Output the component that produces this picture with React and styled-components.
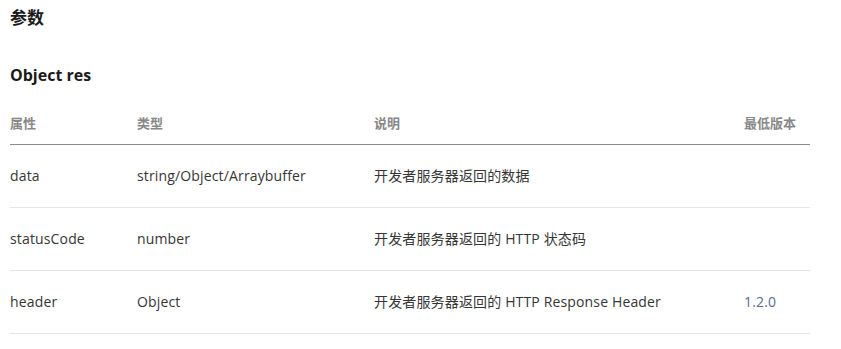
import styled, { createGlobalStyle } from "styled-components";

const GlobalStyle = createGlobalStyle`
  body {
    margin: 0;
    background: #fff;
    font-family: "Open Sans", "Noto Sans CJK SC", sans-serif;
    color: #353535;
  }
`;

const Page = styled.div`
  padding: 6px 10px 0;
`;

const Title = styled.h3`
  margin: 0;
  font-size: 17px;
  line-height: 24px;
  font-weight: 700;
  color: #1a1a1a;
`;

const SubTitle = styled.h4`
  margin: 33px 0 0;
  font-size: 16px;
  line-height: 24px;
  font-weight: 700;
  color: #1a1a1a;
`;

const Table = styled.table`
  margin-top: 12px;
  width: 800px;
  table-layout: fixed;
  border-collapse: collapse;
  font-size: 14px;
`;

const Th = styled.th`
  text-align: left;
  padding: 14px 0 11px;
  line-height: 20px;
  font-size: 13px;
  font-weight: 700;
  color: #888;
  border-bottom: 1px solid #8c8c8c;
`;

const Td = styled.td`
  padding: 21px 0;
  line-height: 20px;
  letter-spacing: 0.15px;
  color: ${(p) => (p.$link ? "#576b95" : "#353535")};
  border-bottom: 1px solid #e5e5e5;
  white-space: nowrap;
`;

const rows = [
  { name: "data", type: "string/Object/Arraybuffer", desc: "开发者服务器返回的数据", ver: "" },
  { name: "statusCode", type: "number", desc: "开发者服务器返回的 HTTP 状态码", ver: "" },
  { name: "header", type: "Object", desc: "开发者服务器返回的 HTTP Response Header", ver: "1.2.0" },
];

export default function App() {
  return (
    <Page>
      <GlobalStyle />
      <Title>参数</Title>
      <SubTitle>Object res</SubTitle>
      <Table>
        <colgroup>
          <col style={{ width: 127 }} />
          <col style={{ width: 237 }} />
          <col style={{ width: 370 }} />
          <col style={{ width: 66 }} />
        </colgroup>
        <thead>
          <tr>
            <Th>属性</Th>
            <Th>类型</Th>
            <Th>说明</Th>
            <Th>最低版本</Th>
          </tr>
        </thead>
        <tbody>
          {rows.map((r) => (
            <tr key={r.name}>
              <Td>{r.name}</Td>
              <Td>{r.type}</Td>
              <Td>{r.desc}</Td>
              <Td $link>{r.ver}</Td>
            </tr>
          ))}
        </tbody>
      </Table>
    </Page>
  );
}
